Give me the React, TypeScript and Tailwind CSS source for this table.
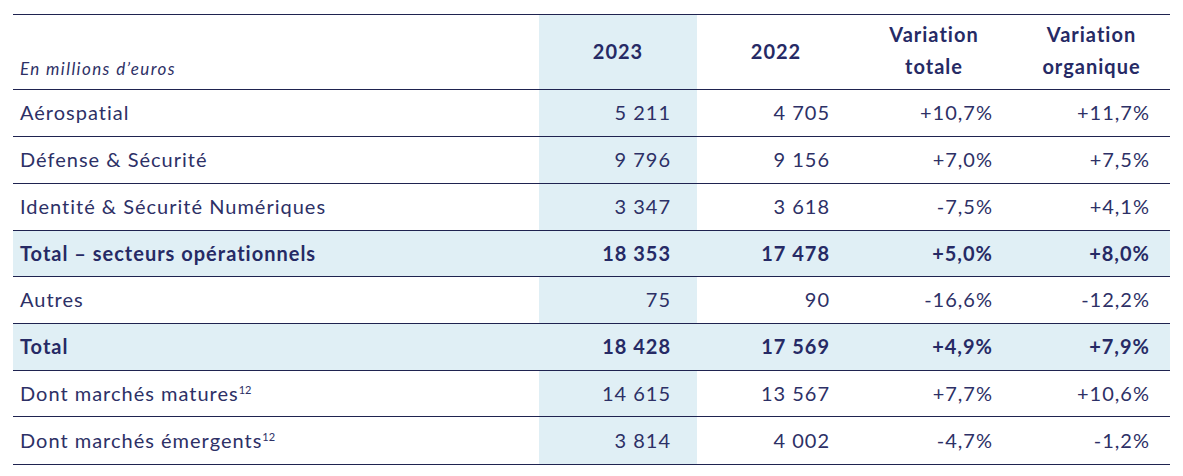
const rows = [
  { label: 'Aérospatial', v: ['5 211', '4 705', '+10,7%', '+11,7%'], h: 'h-[47px]' },
  { label: 'Défense & Sécurité', v: ['9 796', '9 156', '+7,0%', '+7,5%'], h: 'h-[47px]' },
  { label: 'Identité & Sécurité Numériques', v: ['3 347', '3 618', '-7,5%', '+4,1%'], h: 'h-[47px]' },
  { label: 'Total – secteurs opérationnels', v: ['18 353', '17 478', '+5,0%', '+8,0%'], h: 'h-[46px]', total: true },
  { label: 'Autres', v: ['75', '90', '-16,6%', '-12,2%'], h: 'h-[47px]' },
  { label: 'Total', v: ['18 428', '17 569', '+4,9%', '+7,9%'], h: 'h-[47px]', total: true },
  { label: 'Dont marchés matures', sup: '12', v: ['14 615', '13 567', '+7,7%', '+10,6%'], h: 'h-[46px]' },
  { label: 'Dont marchés émergents', sup: '12', v: ['3 814', '4 002', '-4,7%', '-1,2%'], h: 'h-[48px]' },
];

// column widths + right padding so numbers line up with the reference
const colW = ['w-[158px] pr-[26px]', 'w-[158px] pr-[25px]', 'w-[158px] pr-[20px]', 'w-[157px] pr-[20px]'];

export default function App() {
  return (
    <div className="w-[1183px] h-[476px] bg-white pt-[14px] pl-[13px] font-['Lato',sans-serif] text-[#2d3066] tracking-[1px]">
      <div className="w-[1157px] border-t border-[#1f2350]">
        {/* Header */}
        <div className="flex h-[75px] border-b border-[#1f2350]">
          <div className="w-[526px] flex items-end pl-[7px] pb-[8px]">
            <span className="italic text-[17px] tracking-[1.4px]">En millions d’euros</span>
          </div>
          <div className="w-[158px] bg-[#e0eff5] flex items-center justify-center pb-[3px] font-bold text-[20px] text-[#262a65]">
            2023
          </div>
          <div className="w-[158px] flex items-center justify-center pb-[3px] font-bold text-[20px] text-[#262a65]">
            2022
          </div>
          <div className="w-[158px] flex flex-col items-center justify-center pb-[4px] font-bold text-[20px] leading-[32px] text-[#262a65]">
            <span>Variation</span>
            <span>totale</span>
          </div>
          <div className="w-[157px] flex flex-col items-center justify-center pb-[4px] font-bold text-[20px] leading-[32px] text-[#262a65]">
            <span>Variation</span>
            <span>organique</span>
          </div>
        </div>

        {rows.map((r) => (
          <div
            key={r.label}
            className={`flex ${r.h} border-b border-[#1f2350] text-[20px] ${
              r.total ? 'bg-[#e0eff5] font-bold text-[#262a65]' : ''
            }`}
          >
            <div className="w-[526px] flex items-center pl-[7px] pb-[2px]">
              <span>
                {r.label}
                {r.sup && <span className="text-[11px] align-[7px] tracking-normal leading-none">{r.sup}</span>}
              </span>
            </div>
            {r.v.map((v, i) => (
              <div
                key={i}
                className={`${colW[i]} flex items-center justify-end pb-[2px] ${i === 0 && !r.total ? 'bg-[#e0eff5]' : ''}`}
              >
                {v}
              </div>
            ))}
          </div>
        ))}
      </div>
    </div>
  );
}
